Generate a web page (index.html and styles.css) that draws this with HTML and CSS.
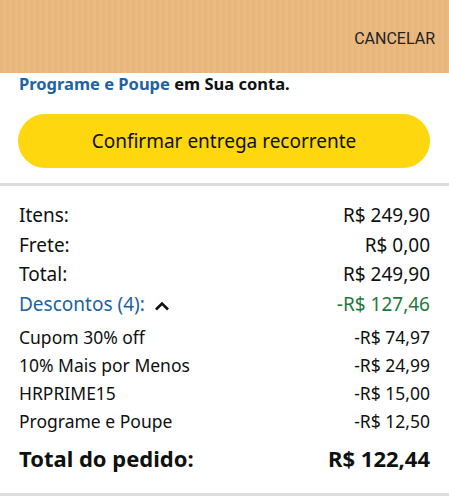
FILE: index.html
```html
<!DOCTYPE html>
<html lang="pt-BR">
<head>
    <meta charset="UTF-8">
    <meta name="viewport" content="width=device-width, initial-scale=1.0">
    <title>Resumo do pedido</title>
    <link rel="stylesheet" href="styles.css">
</head>
<body>
    <header class="top-bar">
        <span class="cancel">CANCELAR</span>
    </header>

    <div class="content">
        <p class="intro"><span class="link">Programe e Poupe</span> em Sua conta.</p>
        <button class="confirm" type="button">Confirmar entrega recorrente</button>
    </div>

    <hr class="divider">

    <!-- Order summary -->
    <div class="summary">
        <div class="row"><span>Itens:</span><span>R$ 249,90</span></div>
        <div class="row"><span>Frete:</span><span>R$ 0,00</span></div>
        <div class="row"><span>Total:</span><span>R$ 249,90</span></div>
        <div class="row">
            <span class="link">Descontos (4): <svg class="caret" width="16" height="10" viewBox="0 0 16 10"><path d="M2 8.5 L8 2.5 L14 8.5" fill="none" stroke="#111" stroke-width="2.6"/></svg></span>
            <span class="green">-R$ 127,46</span>
        </div>
        <div class="row small first"><span>Cupom 30% off</span><span>-R$ 74,97</span></div>
        <div class="row small"><span>10% Mais por Menos</span><span>-R$ 24,99</span></div>
        <div class="row small"><span>HRPRIME15</span><span>-R$ 15,00</span></div>
        <div class="row small"><span>Programe e Poupe</span><span>-R$ 12,50</span></div>
        <div class="row grand"><span>Total do pedido:</span><span>R$ 122,44</span></div>
    </div>

    <hr class="divider bottom">
</body>
</html>
```

FILE: styles.css
```css
body {
    margin: 0;
    font-family: "Noto Sans", Arial, sans-serif;
    color: #0f1111;
    background-color: white;
}
.top-bar {
    height: 73px;
    background-color: #ebb97f;
    background-image: repeating-linear-gradient(90deg, rgba(0, 0, 0, 0.015) 0 3px, rgba(255, 255, 255, 0.02) 3px 6px);
    display: flex;
    justify-content: flex-end;
    align-items: center;
    padding: 0 14px;
}
.cancel {
    font-family: Roboto, sans-serif;
    font-size: 16px;
    color: #222;
    margin-top: 3px;
}
.content {
    padding: 0 19px;
}
.intro {
    margin: 0;
    font-size: 16.5px;
    font-weight: bold;
    line-height: 22px;
}
.link {
    color: #2162a1;
}
.confirm {
    display: block;
    width: 412px;
    height: 54px;
    margin: 19px 0 0 -1px;
    border: none;
    border-radius: 27px;
    background-color: #fed70f;
    color: #0f1111;
    font-family: "Noto Sans", Arial, sans-serif;
    font-size: 19px;
}
.divider {
    margin: 15px 0 0;
    height: 3px;
    border: none;
    background-color: #dddddd;
}
.divider.bottom {
    margin-top: 21px;
}
.summary {
    padding: 15px 19px 0;
}
.row {
    display: flex;
    justify-content: space-between;
    align-items: center;
    font-size: 19px;
    line-height: 29.5px;
}
.row.small {
    font-size: 17.5px;
    line-height: 28px;
}
.row.first {
    margin-top: 4px;
}
.caret {
    margin-left: 4px;
}
.green {
    color: #1e7a3c;
}
.grand {
    font-size: 22px;
    font-weight: bold;
    margin-top: 9px;
    line-height: 28px;
}
```
